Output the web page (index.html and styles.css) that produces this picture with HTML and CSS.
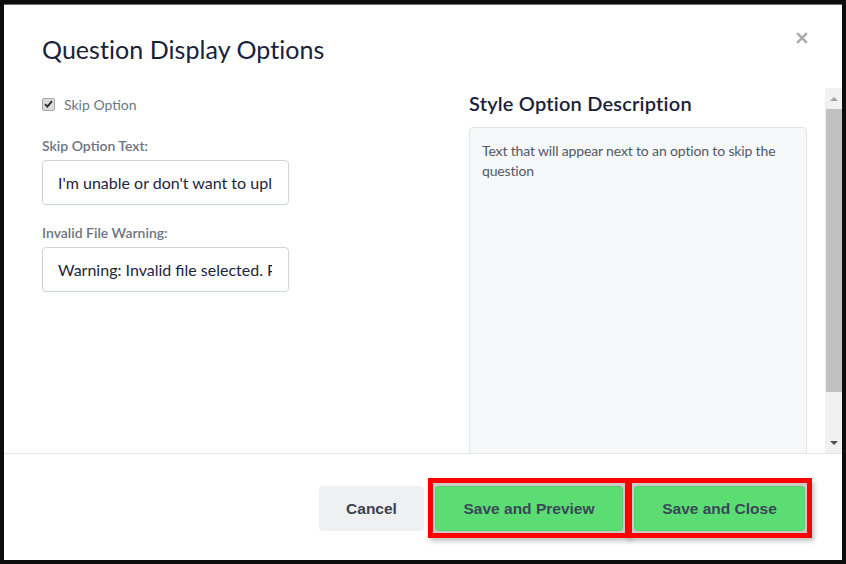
FILE: index.html
```html
<!DOCTYPE html>
<html lang="en">
<head>
<meta charset="utf-8">
<title>Question Display Options</title>
<link rel="stylesheet" href="styles.css">
</head>
<body>
<div class="modal">
  <div class="modal-header">
    <h2 class="modal-title">Question Display Options</h2>
    <button class="close" type="button" aria-label="Close">
      <svg width="12" height="12" viewBox="0 0 12 12"><path d="M1.2 1.2L10.8 10.8M10.8 1.2L1.2 10.8" stroke="#acacac" stroke-width="2.6" stroke-linecap="butt"/></svg>
    </button>
  </div>
  <div class="modal-body">
    <div class="body-content">
      <div class="col-left">
        <label class="check-row">
          <span class="checkbox"><svg width="9" height="8" viewBox="0 0 9 8"><path d="M1 4.2L3.4 6.6L8 1.2" fill="none" stroke="#2b2b2b" stroke-width="1.9"/></svg></span>
          <span class="check-label">Skip Option</span>
        </label>
        <div class="field field-first">
          <div class="field-label">Skip Option Text:</div>
          <input class="text-input" type="text" value="I'm unable or don't want to upload a file">
        </div>
        <div class="field">
          <div class="field-label">Invalid File Warning:</div>
          <input class="text-input" type="text" value="Warning: Invalid file selected. Please upload a valid file.">
        </div>
      </div>
      <div class="col-right">
        <h3 class="desc-title">Style Option Description</h3>
        <div class="desc-box">Text that will appear next to an option to skip the question</div>
      </div>
    </div>
    <div class="scrollbar">
      <div class="sb-btn"><span class="arrow-up"></span></div>
      <div class="sb-track"><div class="sb-thumb"></div></div>
      <div class="sb-btn"><span class="arrow-down"></span></div>
    </div>
  </div>
  <div class="modal-footer">
    <button class="btn btn-cancel" type="button">Cancel</button>
    <button class="btn btn-save btn-preview" type="button">Save and Preview</button>
    <button class="btn btn-save btn-close" type="button">Save and Close</button>
  </div>
</div>
</body>
</html>
```
FILE: styles.css
```css
* { box-sizing: border-box; }
html, body { margin: 0; padding: 0; background: #fff; }
body { font-family: "Lato", "Open Sans", sans-serif; }

.modal {
  width: 846px;
  height: 564px;
  border: 4px solid #0d0d0d;
  box-shadow: inset 0 1px 0 #6e6e6e;
  display: flex;
  flex-direction: column;
  background: #fff;
  overflow: hidden;
}

.modal-header {
  flex: 0 0 84px;
  display: flex;
  justify-content: space-between;
  align-items: flex-start;
  padding: 28px 34px 0 38px;
}
.modal-title {
  margin: 1px 0 0;
  font-size: 25px;
  font-weight: 400;
  line-height: 32px;
  color: #19213a;
  letter-spacing: 0.05px;
}
.close {
  border: 0;
  background: none;
  padding: 0;
  margin: 0;
  width: 12px;
  height: 12px;
  display: block;
  cursor: pointer;
}
.close svg { display: block; }

.modal-body {
  flex: 0 0 365px;
  display: flex;
  overflow: hidden;
}
.body-content {
  flex: 1;
  display: flex;
  gap: 180px;
  padding: 5px 0 0 38px;
  overflow: hidden;
}
.col-left { width: 247px; flex: 0 0 247px; }
.col-right { width: 338px; flex: 0 0 338px; }

.check-row {
  display: flex;
  align-items: center;
  height: 20px;
  gap: 9px;
  margin-top: 1px;
}
.checkbox {
  width: 13px;
  height: 13px;
  border: 1px solid #a7a7a7;
  border-radius: 2px;
  background: #dcdcdc;
  display: flex;
  align-items: center;
  justify-content: center;
}
.checkbox svg { display: block; }
.check-label {
  font-size: 14px;
  line-height: 20px;
  color: #6a7889;
  padding-top: 2px;
}

.field { margin-top: 18px; }
.field.field-first { margin-top: 22px; }
.field-label {
  font-size: 14px;
  line-height: 20px;
  font-weight: 600;
  color: #6b7480;
  margin-bottom: 4px;
}
.text-input {
  display: block;
  width: 247px;
  height: 45px;
  border: 1px solid #cfd4da;
  border-radius: 4px;
  padding: 0 16px 0 15px;
  font-family: "Lato", "Open Sans", sans-serif;
  font-size: 16px;
  color: #1c2540;
  background: #fff;
  outline: none;
}

.desc-title {
  margin: 0 0 14px;
  font-size: 20px;
  line-height: 20px;
  font-weight: 600;
  color: #1a2238;
  letter-spacing: 0.2px;
}
.desc-box {
  height: 420px;
  background: #f7f8fa;
  border: 1px solid #e2e5e9;
  border-radius: 4px;
  padding: 13px 12px;
  font-size: 14px;
  line-height: 20px;
  color: #505a66;
  letter-spacing: -0.15px;
}

.scrollbar {
  flex: 0 0 17px;
  width: 17px;
  background: #f1f1f1;
  display: flex;
  flex-direction: column;
}
.sb-btn {
  flex: 0 0 21px;
  display: flex;
  align-items: center;
  justify-content: center;
}
.arrow-up {
  width: 0; height: 0;
  border-left: 4px solid transparent;
  border-right: 4px solid transparent;
  border-bottom: 4px solid #a3a3a3;
}
.arrow-down {
  width: 0; height: 0;
  border-left: 4px solid transparent;
  border-right: 4px solid transparent;
  border-top: 4px solid #505050;
}
.sb-track { flex: 1; }
.sb-thumb {
  height: 283px;
  margin-left: 1px;
  background: #c1c1c1;
}

.modal-footer {
  flex: 1;
  border-top: 1px solid #e5e5e5;
  display: flex;
  justify-content: flex-end;
  align-items: flex-start;
  gap: 11px;
  padding: 32px 37px 0 0;
}
.btn {
  height: 45px;
  border: 0;
  border-radius: 4px;
  font-family: "Liberation Sans", Arial, sans-serif;
  font-weight: 700;
  font-size: 15.5px;
  padding: 0;
  cursor: pointer;
}
.btn-cancel {
  width: 105px;
  background: #eff0f2;
  color: #3a4150;
}
.btn-save {
  position: relative;
  background: #5bdd73;
  color: #3a4758;
  box-shadow: inset 0 0 0 1px rgba(0,0,0,0.06), 0 0 0 2px #cacaca;
}
/* red highlight annotation drawn over each save button */
.btn-save::after {
  content: "";
  position: absolute;
  top: -8px;
  bottom: -7px;
  left: -7px;
  right: -7px;
  border: 5px solid #ff0000;
  box-shadow: inset 0 0 0 2px #cacaca, 2px 3px 5px rgba(0,0,0,0.25);
  pointer-events: none;
}
.btn-preview { width: 188px; }
.btn-close { width: 171px; }
```
